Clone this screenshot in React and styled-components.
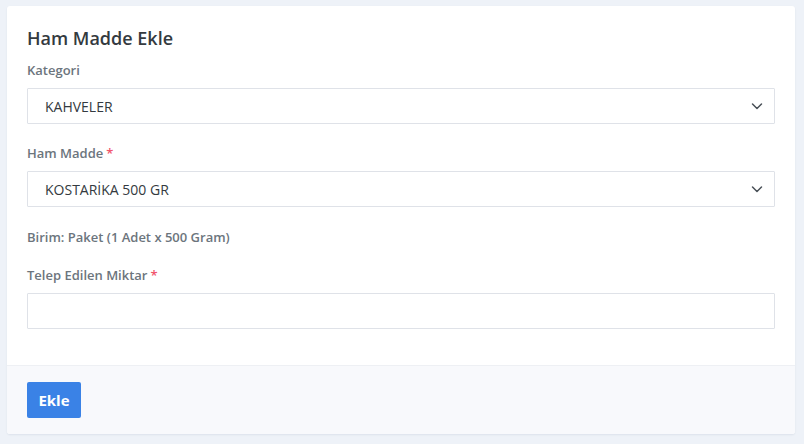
import React from "react";
import styled, { createGlobalStyle } from "styled-components";

const Global = createGlobalStyle`
  html, body { margin: 0; padding: 0; background: #eef2f8; }
  body { font-family: "Open Sans", "Noto Sans", sans-serif; }
  * { box-sizing: border-box; }
`;

const Page = styled.div`
  padding: 6px 9px 10px 7px;
`;

const Card = styled.div`
  background: #ffffff;
  border-radius: 3px;
  box-shadow: 0 1px 2px rgba(30, 50, 90, 0.08);
  overflow: hidden;
`;

const Body = styled.div`
  padding: 21px 20px 36px;
  display: flex;
  flex-direction: column;
`;

const Title = styled.h3`
  margin: 0 0 12px;
  font-size: 18px;
  line-height: 22px;
  font-weight: 600;
  color: #343a40;
`;

const Group = styled.div`
  display: flex;
  flex-direction: column;
  margin-bottom: ${(p) => p.$mb ?? 20}px;
`;

const Label = styled.label`
  font-size: 13px;
  line-height: 18px;
  font-weight: 600;
  color: #6c757d;
  margin-bottom: ${(p) => (p.$plain ? 0 : 9)}px;
`;

const Req = styled.span`
  color: #f1556c;
  margin-left: 3px;
`;

const SelectBox = styled.div`
  position: relative;
  height: 36px;
  border: 1px solid #dfe2e8;
  border-radius: 1px;
  background: #fff;
  display: flex;
  align-items: center;
  padding: 0 17px;
  font-size: 14px;
  color: #343a40;
`;

const Chevron = styled.svg`
  position: absolute;
  right: 10px;
  top: 50%;
  transform: translateY(-50%);
`;

const Input = styled.input`
  height: 36px;
  border: 1px solid #dfe2e8;
  border-radius: 1px;
  background: #fff;
  padding: 0 17px;
  font-family: inherit;
  font-size: 14px;
  outline: none;
`;

const Footer = styled.div`
  border-top: 1px solid #eef0f4;
  background: #f8f9fc;
  padding: 16px 20px;
  display: flex;
`;

const Button = styled.button`
  height: 36px;
  width: 54px;
  border: none;
  border-radius: 2px;
  background: #3a82e6;
  color: #fff;
  font-family: inherit;
  font-size: 15px;
  font-weight: 700;
  cursor: pointer;
`;

const Select = ({ value }) => (
  <SelectBox>
    {value}
    <Chevron width="14" height="14" viewBox="0 0 14 14">
      <polyline points="2.5,5 7,9.5 11.5,5" fill="none" stroke="#495057" strokeWidth="1.5" strokeLinecap="round" strokeLinejoin="round" />
    </Chevron>
  </SelectBox>
);

export default function App() {
  return (
    <>
      <Global />
      <Page>
        <Card>
          <Body>
            <Title>Ham Madde Ekle</Title>
            <Group>
              <Label>Kategori</Label>
              <Select value="KAHVELER" />
            </Group>
            <Group $mb={21}>
              <Label>
                Ham Madde<Req>*</Req>
              </Label>
              <Select value="KOSTARİKA 500 GR" />
            </Group>
            <Group>
              <Label $plain>Birim: Paket (1 Adet x 500 Gram)</Label>
            </Group>
            <Group $mb={0}>
              <Label>
                Telep Edilen Miktar<Req>*</Req>
              </Label>
              <Input type="text" />
            </Group>
          </Body>
          <Footer>
            <Button>Ekle</Button>
          </Footer>
        </Card>
      </Page>
    </>
  );
}
